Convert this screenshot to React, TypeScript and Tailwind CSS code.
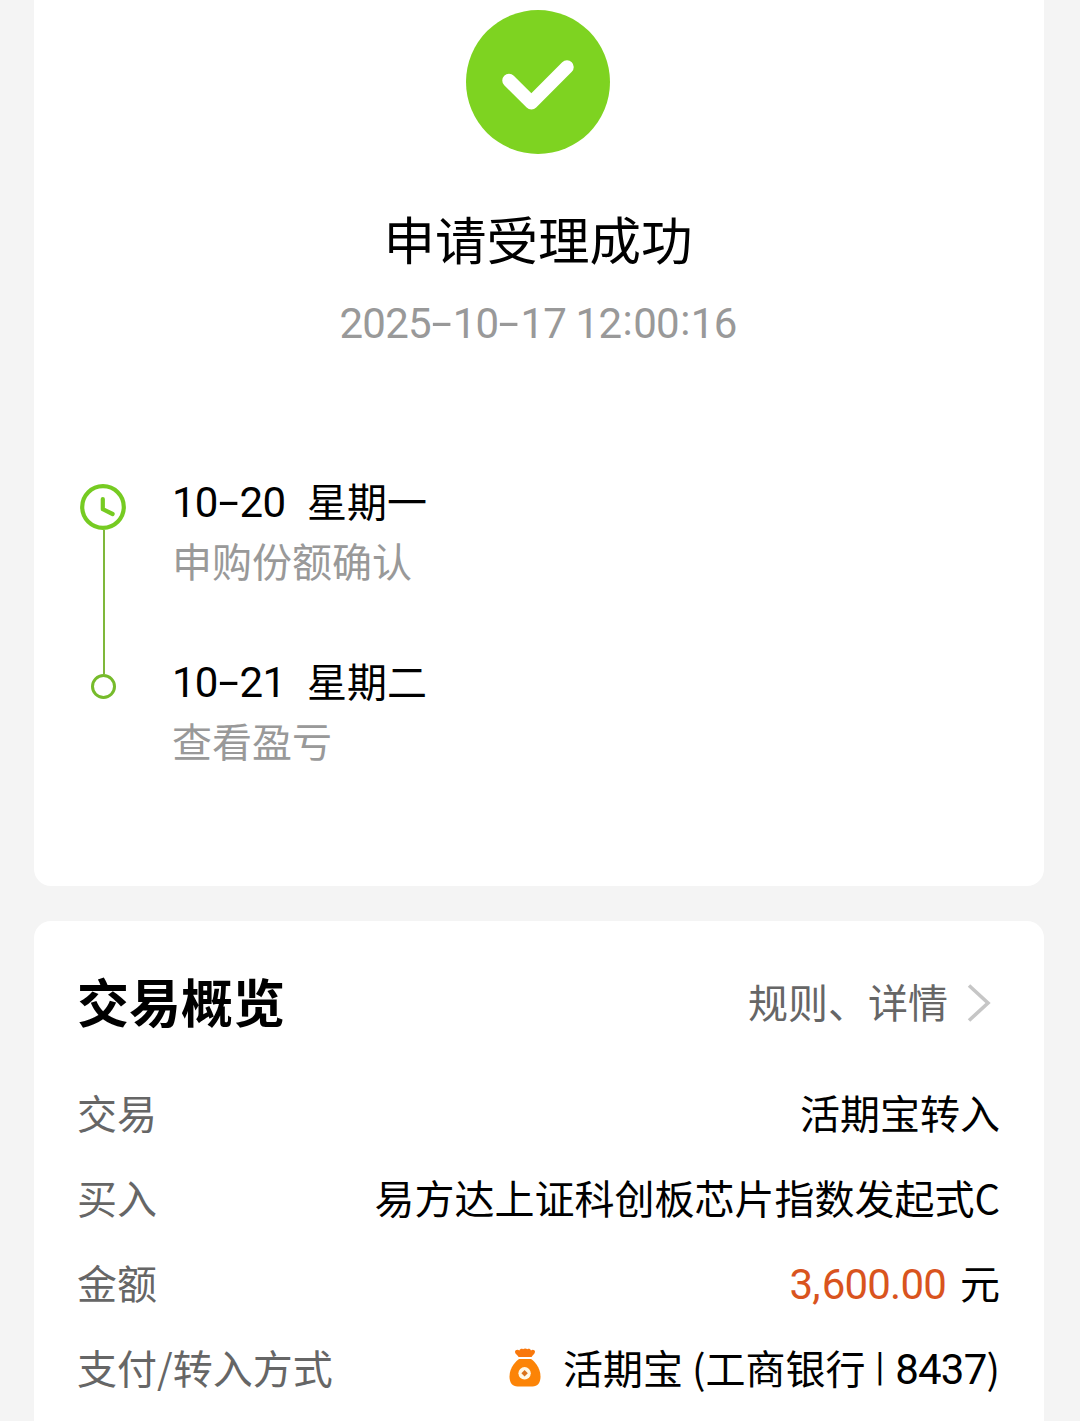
import { Fragment, type ReactNode } from 'react';

const STEPS = [
  { date: '10-20', weekday: '星期一', desc: '申购份额确认' },
  { date: '10-21', weekday: '星期二', desc: '查看盈亏' },
];

function SuccessIcon() {
  return (
    <svg className="size-36" viewBox="0 0 144 144" fill="none">
      <circle cx="72" cy="72" r="72" fill="#7ed321" />
      <path
        d="M43 70.5 65.4 92.8 101 57"
        stroke="#fff"
        strokeWidth="13.5"
        strokeLinecap="round"
        strokeLinejoin="round"
      />
    </svg>
  );
}

function ClockIcon() {
  return (
    <svg className="size-[46px]" viewBox="0 0 46 46" fill="none" stroke="#76cb22" strokeWidth="4.2">
      <circle cx="23" cy="23" r="20.8" />
      <path d="M22.8 15v10.2l9.8 4.8" strokeLinecap="round" strokeLinejoin="round" />
    </svg>
  );
}

function MoneyBagIcon() {
  return (
    <svg className="h-[39px] w-8 shrink-0" viewBox="0 0 32 39">
      <path
        d="M9.5 9C8.8 7 6 6.2 6 3.8c0-2 2.8-2.8 4.3-1.3C11 .8 13 .4 14 1.300c1-1.200 3.400-1.200 4.400 0 1.200-.9 3-.4 3.600 1.200 1.600-1.300 4-.5 4 1.300 0 2.400-2.600 3.200-3.400 5.200Z"
        fill="#f9780c"
      />
      <path
        d="M10.2 11h11.800c2.600 1.600 9.500 8 9.500 17.500 0 6.500-3 10-8 10h-15c-5 0-8-3.500-8-10C.5 19 7.600 12.600 10.200 11Z"
        fill="#fc8407"
      />
      <circle cx="15.600" cy="25.300" r="6.200" fill="#fff8e6" />
      <path d="m15.600 22.100 3.200 3.200-3.200 3.200-3.200-3.200Z" fill="#d9721c" />
    </svg>
  );
}

function ChevronIcon() {
  return (
    <svg className="h-10 w-6" viewBox="0 0 24 40" fill="none">
      <path d="m2 2.500 19 17.500L2 37.500" stroke="#c6c6c6" strokeWidth="3.600" />
    </svg>
  );
}

function Digits({ children }: { children: ReactNode }) {
  return (
    <span className="font-['Roboto',sans-serif] text-[42px] leading-none tracking-[-0.8px]">{children}</span>
  );
}

// Numeric date with wide dashes and raised colons
function DateText({ value }: { value: string }) {
  return (
    <Digits>
      {value.split(/([-:])/).map((part, i) => {
        if (part === '-') {
          return (
            <span key={i} className="inline-block w-[22px] -translate-x-px -translate-y-px scale-x-175 text-center">
              -
            </span>
          );
        }
        if (part === ':') {
          return (
            <span key={i} className="inline-block w-3 -translate-y-[3px] text-center">
              :
            </span>
          );
        }
        return <Fragment key={i}>{part}</Fragment>;
      })}
    </Digits>
  );
}

function Row({ label, children }: { label: string; children: ReactNode }) {
  return (
    <div className="flex h-[85px] items-center justify-between whitespace-pre">
      <span className="text-[#666]">{label}</span>
      {children}
    </div>
  );
}

export default function App() {
  return (
    <div className="h-[1421px] overflow-hidden bg-[#f4f4f4] pr-9 pl-[34px] font-['Noto_Sans_CJK_SC',sans-serif] text-[40px] leading-[60px] text-black">
      <section className="h-[886px] rounded-b-[17px] bg-white pt-[10px]">
        <div className="flex flex-col items-center pr-[2px]">
          <SuccessIcon />
          <h1 className="mt-[44px] text-[51.5px] leading-[80px]">申请受理成功</h1>
          <p className="mt-[13px] text-[#999]">
            <DateText value="2025-10-17 12:00:16" />
          </p>
        </div>

        <div className="mt-[119px] flex pl-[46px]">
          <div className="flex w-[46px] flex-col items-center pt-[14px]">
            <ClockIcon />
            <div className="ml-[2px] h-[144px] w-[2px] bg-[#7fb83a]" />
            <div className="ml-px size-[25px] rounded-full border-[3px] border-[#76bb2b]" />
          </div>
          <div className="ml-[46px] flex flex-col gap-[60px]">
            {STEPS.map((step) => (
              <div key={step.date}>
                <p>
                  <span className="inline-block w-[135px]">
                    <DateText value={step.date} />
                  </span>
                  {step.weekday}
                </p>
                <p className="text-[#999]">{step.desc}</p>
              </div>
            ))}
          </div>
        </div>
      </section>

      <section className="mt-[35px] h-[520px] rounded-t-[17px] bg-white pr-11 pl-[43px]">
        <div className="flex h-[148px] items-center justify-between pt-[11px]">
          <h2 className="text-[52px] leading-[80px] font-bold">交易概览</h2>
          <div className="flex items-center pr-[9px] text-[#666]">
            规则、详情
            <span className="mt-1 ml-[19px]">
              <ChevronIcon />
            </span>
          </div>
        </div>
        <Row label="交易">
          <span>活期宝转入</span>
        </Row>
        <Row label="买入">
          <span>易方达上证科创板芯片指数发起式C</span>
        </Row>
        <Row label="金额">
          <div>
            <span className="mr-[14px] text-[#d9541e]">
              <Digits>
                3<span className="mr-[2px]">,</span>600.00
              </Digits>
            </span>
            元
          </div>
        </Row>
        <Row label="支付/转入方式">
          <div className="flex items-center">
            <span className="mt-[2px]">
              <MoneyBagIcon />
            </span>
            <p className="ml-[22px]">
              活期宝 (工商银行
              <span className="mr-[10px] ml-[9px] inline-block -translate-y-[3px] scale-y-75">|</span>
              <Digits>8437</Digits>)
            </p>
          </div>
        </Row>
      </section>
    </div>
  );
}
